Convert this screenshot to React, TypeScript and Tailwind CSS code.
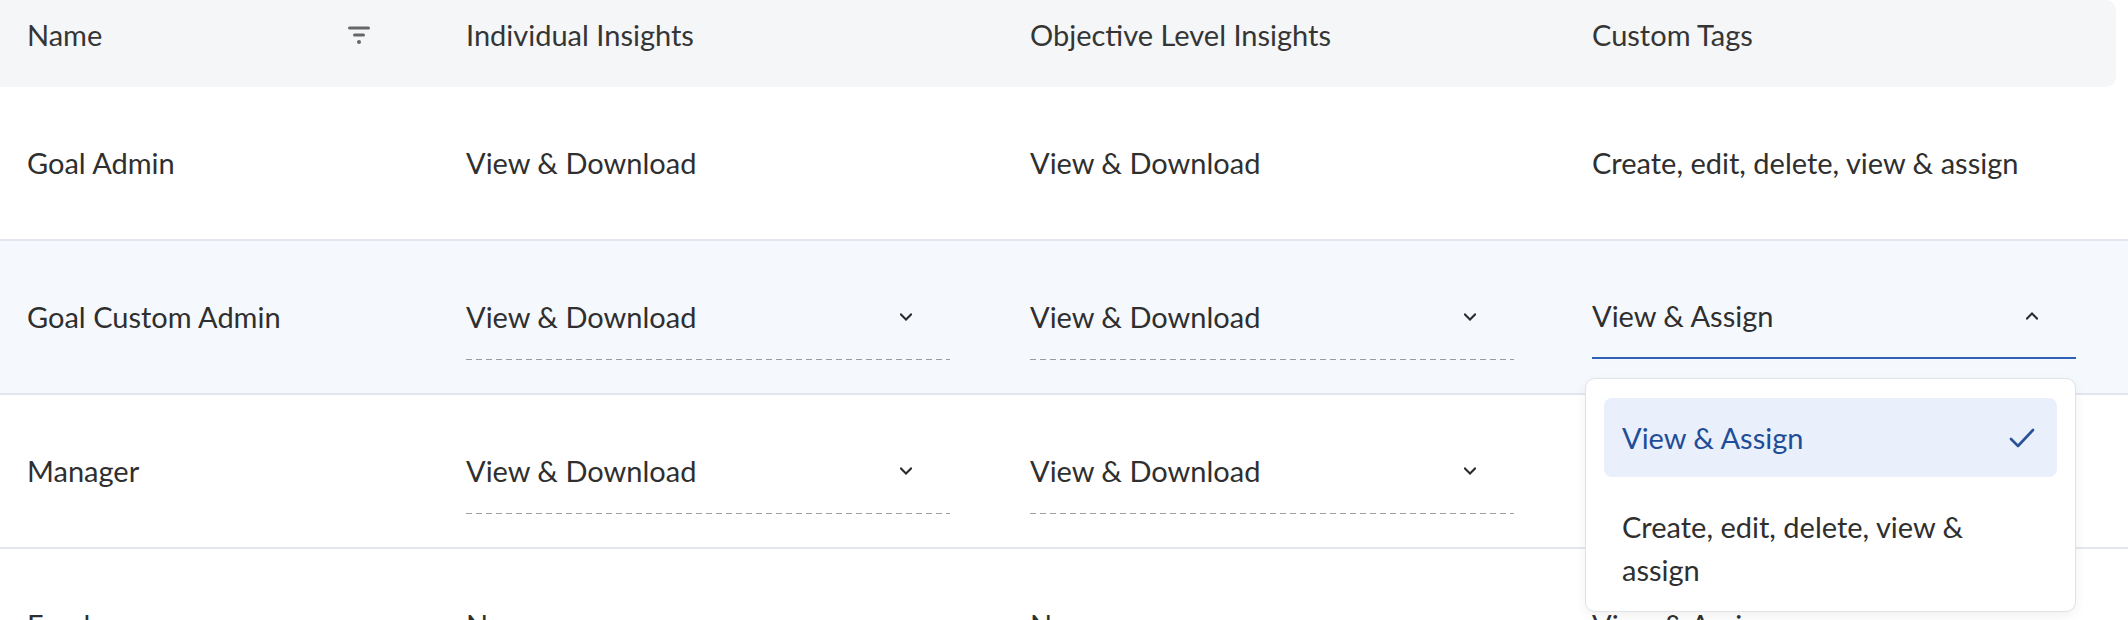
import React from 'react';

type Cell = { text: string; select?: boolean };

interface RoleRow {
  name: string;
  cells: Cell[];
  active?: boolean;
}

const rows: RoleRow[] = [
  {
    name: 'Goal Admin',
    cells: [
      { text: 'View & Download' },
      { text: 'View & Download' },
      { text: 'Create, edit, delete, view & assign' },
    ],
  },
  {
    name: 'Goal Custom Admin',
    active: true,
    cells: [
      { text: 'View & Download', select: true },
      { text: 'View & Download', select: true },
      { text: 'View & Assign', select: true },
    ],
  },
  {
    name: 'Manager',
    cells: [
      { text: 'View & Download', select: true },
      { text: 'View & Download', select: true },
      { text: 'View & Assign', select: true },
    ],
  },
  {
    name: 'Employee',
    cells: [{ text: 'None' }, { text: 'None' }, { text: 'View & Assign' }],
  },
];

const FilterIcon = () => (
  <svg width="24" height="20" viewBox="0 0 24 20" fill="none">
    <line x1="2.5" y1="3" x2="21.5" y2="3" stroke="#676767" strokeWidth="3" strokeLinecap="round" />
    <line x1="7.5" y1="10" x2="16.5" y2="10" stroke="#676767" strokeWidth="3" strokeLinecap="round" />
    <circle cx="12" cy="17" r="2" fill="#676767" />
  </svg>
);

const Chevron = ({ up }: { up?: boolean }) => (
  <svg width="12" height="8" viewBox="0 0 12 8" fill="none">
    <path
      d={up ? 'M1 6.5 L6 1.5 L11 6.5' : 'M1 1.5 L6 6.5 L11 1.5'}
      stroke="#2b2b2b"
      strokeWidth="2"
      strokeLinecap="square"
    />
  </svg>
);

const Check = () => (
  <svg width="26" height="20" viewBox="0 0 26 20" fill="none">
    <path d="M2 11 L9 18 L24 2" stroke="#2a5299" strokeWidth="2.6" strokeLinecap="round" strokeLinejoin="round" />
  </svg>
);

const SelectMenu = () => (
  <div className="absolute left-[-7px] top-[calc(100%+19px)] z-10 w-[491px] rounded-[10px] border border-[#dfe2e7] bg-white px-[18px] pb-[20px] pt-[19px] shadow-[0_4px_12px_rgba(0,0,0,0.06)]">
    <div className="flex h-[79px] items-center justify-between rounded-[8px] bg-[#e9f0fb] pl-[18px] pr-[22px] text-[#1f4d98]">
      <span>View &amp; Assign</span>
      <Check />
    </div>
    <div className="pl-[18px] pr-[60px] pt-[28px] leading-[43px]">Create, edit, delete, view &amp; assign</div>
  </div>
);

const SelectField = ({ value, open }: { value: string; open?: boolean }) => (
  <div className="relative w-[484px]">
    <div
      className={
        open
          ? 'flex h-[84px] items-center justify-between border-b-2 border-[#2f62b4] pr-[38px]'
          : 'flex h-[84px] items-center justify-between pr-[38px]'
      }
    >
      <span>{value}</span>
      <Chevron up={open} />
    </div>
    {!open && (
      <div className="h-px w-full bg-[repeating-linear-gradient(to_right,#9c9c9c_0_6px,transparent_6px_10px)]" />
    )}
    {open && <SelectMenu />}
  </div>
);

export default function App() {
  return (
    <div className="min-h-screen w-full overflow-hidden bg-white font-['Lato',sans-serif] text-[29px] text-[#2f2f2f]">
      <div className="mr-[12px] grid h-[87px] grid-cols-[439px_564px_562px_1fr] rounded-r-[10px] bg-[#f5f6f8] text-[#353535]">
        <div className="flex items-start justify-between pl-[27px] pr-[68px] pt-[16px]">
          <span className="leading-[38px]">Name</span>
          <span className="mt-[9px]">
            <FilterIcon />
          </span>
        </div>
        <div className="pl-[27px] pt-[16px] leading-[38px]">Individual Insights</div>
        <div className="pl-[27px] pt-[16px] leading-[38px]">Objective Level Insights</div>
        <div className="pl-[27px] pt-[16px] leading-[38px]">Custom Tags</div>
      </div>

      {rows.map((row, i) => (
        <div
          key={row.name}
          className={
            row.active
              ? 'grid h-[154px] grid-cols-[439px_564px_562px_1fr] border-b-2 border-[#e3e6ee] bg-[#f5f9fe]'
              : 'grid h-[154px] grid-cols-[439px_564px_562px_1fr] border-b-2 border-[#e3e6ee]'
          }
        >
          <div className="flex items-center pl-[27px]">{row.name}</div>
          {row.cells.map((cell, j) => (
            <div key={j} className="flex items-center pl-[27px]">
              {cell.select ? <SelectField value={cell.text} open={i === 1 && j === 2} /> : <span>{cell.text}</span>}
            </div>
          ))}
        </div>
      ))}
    </div>
  );
}
